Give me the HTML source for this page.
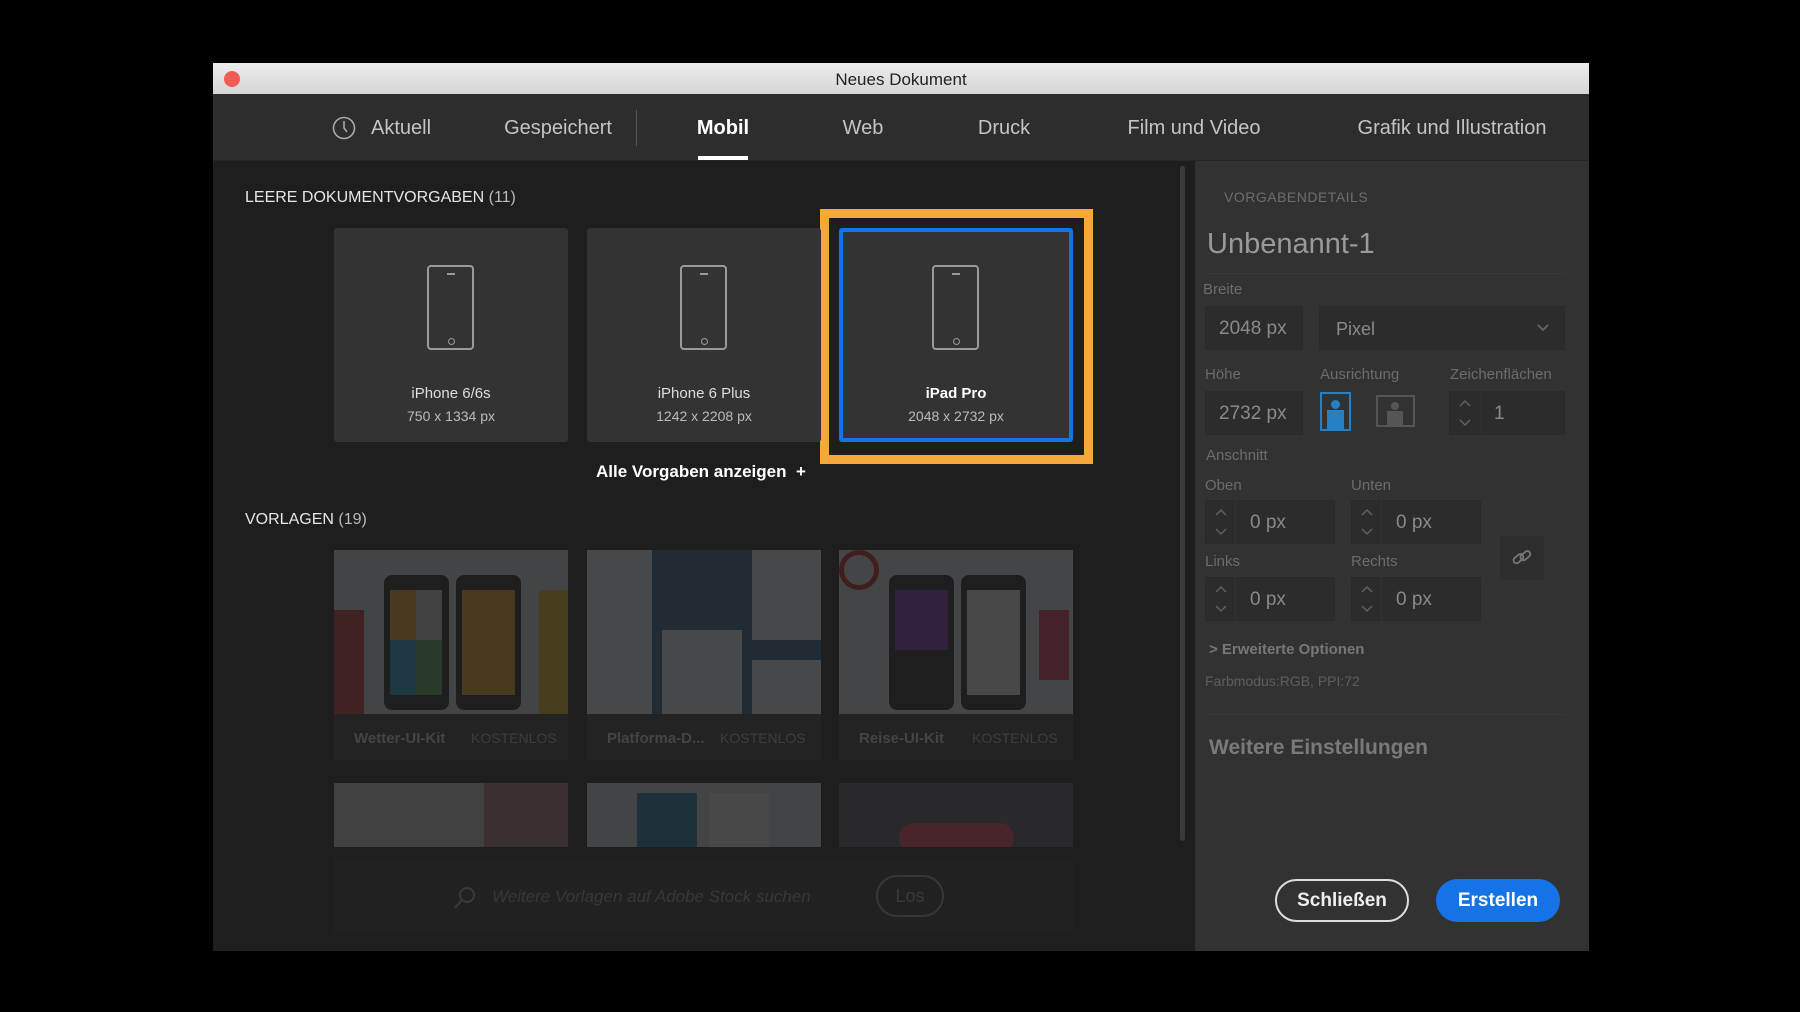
<!DOCTYPE html>
<html><head><meta charset="utf-8"><style>
*{margin:0;padding:0;box-sizing:border-box}
body{width:1800px;height:1012px;background:#000;font-family:"Liberation Sans",sans-serif;position:relative;overflow:hidden}
.a{position:absolute}
.win{left:213px;top:63px;width:1376px;height:888px;background:#1e1e1e}
.title{left:213px;top:63px;width:1376px;height:31px;background:linear-gradient(#ececec,#d6d6d6);color:#222;font-size:17px;text-align:center;line-height:33px}
.tabs{left:213px;top:94px;width:1376px;height:67px;background:#2d2d2d;border-bottom:1px solid #262626}
.tab{position:absolute;top:117px;color:#c4c4c4;font-size:20px;transform:translateX(-50%);white-space:nowrap}
.card{position:absolute;top:228px;width:234px;height:214px;background:#333;border-radius:3px}
.card .ph{position:absolute;left:93px;top:37px;width:47px;height:85px;border:2px solid #9a9a9a;border-radius:4px}
.card .ph:before{content:"";position:absolute;left:18px;top:6px;width:8px;height:2px;background:#9a9a9a}
.card .ph:after{content:"";position:absolute;left:19px;top:71px;width:5px;height:5px;border:1px solid #9a9a9a;border-radius:50%}
.card .n{position:absolute;top:157px;width:100%;text-align:center;color:#ddd;font-size:15px}
.card .s{position:absolute;top:180px;width:100%;text-align:center;color:#bbb;font-size:14px}
.right{left:1195px;top:161px;width:394px;height:790px;background:#323232}
.lbl{position:absolute;color:#6c6c6c;font-size:15px}
.fld{position:absolute;background:#2c2c2c;border:1px solid #2a2a2a;color:#8a8a8a;font-size:19px;line-height:44px}
.tpl{position:absolute;width:234px;opacity:.2;overflow:hidden}
.st{position:absolute}
</style></head><body>
<div class="a win"></div>
<div class="a title"><span class="a" style="left:11px;top:8px;width:16px;height:16px;border-radius:50%;background:#f45b55"></span>Neues Dokument</div>
<div class="a tabs"></div>
<svg class="a" style="left:332px;top:116px" width="24" height="24" viewBox="0 0 24 24"><circle cx="12" cy="12" r="10.5" fill="none" stroke="#aaa" stroke-width="1.6"/><path d="M12 5v7l3 4" fill="none" stroke="#aaa" stroke-width="1.6"/></svg>
<div class="tab" style="left:401px">Aktuell</div>
<div class="tab" style="left:558px">Gespeichert</div>
<div class="a" style="left:636px;top:110px;width:1px;height:36px;background:#555"></div>
<div class="tab" style="left:723px;color:#fff;font-weight:bold">Mobil</div>
<div class="a" style="left:698px;top:156px;width:50px;height:4px;background:#fff"></div>
<div class="tab" style="left:863px">Web</div>
<div class="tab" style="left:1004px">Druck</div>
<div class="tab" style="left:1194px">Film und Video</div>
<div class="tab" style="left:1452px">Grafik und Illustration</div>

<div class="a" style="left:245px;top:189px;color:#e6e6e6;font-size:16px">LEERE DOKUMENTVORGABEN <span style="color:#bbb">(11)</span></div>
<div class="a" style="left:820px;top:209px;width:273px;height:255px;border:9px solid #f5a93a"></div>
<div class="card" style="left:334px"><div class="ph"></div><div class="n">iPhone 6/6s</div><div class="s">750 x 1334 px</div></div>
<div class="card" style="left:587px"><div class="ph"></div><div class="n">iPhone 6 Plus</div><div class="s">1242 x 2208 px</div></div>
<div class="card" style="left:839px;border:4px solid #1473e6"><div class="ph" style="left:89px;top:33px"></div><div class="n" style="top:153px;color:#fff;font-weight:bold">iPad Pro</div><div class="s" style="top:176px">2048 x 2732 px</div></div>
<div class="a" style="left:596px;top:462px;color:#fff;font-size:17px;font-weight:bold">Alle Vorgaben anzeigen&nbsp; +</div>

<div class="a" style="left:245px;top:511px;color:#e6e6e6;font-size:16px">VORLAGEN <span style="color:#bbb">(19)</span></div>
<div class="tpl" style="left:334px;top:550px;height:164px;background:#d8dde0">
<div class="a" style="left:0;top:60px;width:30px;height:104px;background:#c33"></div>
<div class="a" style="left:50px;top:25px;width:65px;height:135px;background:#222;border-radius:8px"></div>
<div class="a" style="left:56px;top:40px;width:26px;height:50px;background:#f5a623"></div><div class="a" style="left:82px;top:40px;width:26px;height:50px;background:#ccc"></div>
<div class="a" style="left:56px;top:90px;width:26px;height:55px;background:#1aa0c8"></div><div class="a" style="left:82px;top:90px;width:26px;height:55px;background:#4caf50"></div>
<div class="a" style="left:122px;top:25px;width:65px;height:135px;background:#222;border-radius:8px"></div>
<div class="a" style="left:128px;top:40px;width:53px;height:105px;background:#f5a623"></div>
<div class="a" style="left:205px;top:40px;width:29px;height:124px;background:#e8c020"></div></div>
<div class="tpl" style="left:587px;top:550px;height:164px;background:#2a5f8a">
<div class="a" style="left:0;top:0;width:65px;height:164px;background:#e8eef3"></div><div class="a" style="left:75px;top:80px;width:80px;height:84px;background:#e8eef3"></div><div class="a" style="left:165px;top:0;width:69px;height:90px;background:#e8eef3"></div><div class="a" style="left:165px;top:110px;width:69px;height:54px;background:#e8eef3"></div></div>
<div class="tpl" style="left:839px;top:550px;height:164px;background:#dde2e6">
<div class="a" style="left:50px;top:25px;width:65px;height:135px;background:#222;border-radius:8px"></div><div class="a" style="left:56px;top:40px;width:53px;height:60px;background:#7b2fbf"></div>
<div class="a" style="left:122px;top:25px;width:65px;height:135px;background:#222;border-radius:8px"></div><div class="a" style="left:128px;top:40px;width:53px;height:105px;background:#f0f0f0"></div>
<div class="a" style="left:200px;top:60px;width:30px;height:70px;background:#e0335a"></div><div class="a" style="left:0;top:0;width:40px;height:40px;border:5px solid #c22;border-radius:50%"></div></div>
<div class="tpl" style="left:334px;top:714px;height:46px;background:#232323;opacity:1"><span class="a" style="left:20px;top:16px;color:#444;font-size:15px;font-weight:bold">Wetter-UI-Kit</span><span class="a" style="left:137px;top:16px;color:#3e3e3e;font-size:14px">KOSTENLOS</span></div>
<div class="tpl" style="left:587px;top:714px;height:46px;background:#232323;opacity:1"><span class="a" style="left:20px;top:16px;color:#444;font-size:15px;font-weight:bold">Platforma-D...</span><span class="a" style="left:133px;top:16px;color:#3e3e3e;font-size:14px">KOSTENLOS</span></div>
<div class="tpl" style="left:839px;top:714px;height:46px;background:#232323;opacity:1"><span class="a" style="left:20px;top:16px;color:#444;font-size:15px;font-weight:bold">Reise-UI-Kit</span><span class="a" style="left:133px;top:16px;color:#3e3e3e;font-size:14px">KOSTENLOS</span></div>
<div class="tpl" style="left:334px;top:783px;height:64px;background:#ccc"><div class="a" style="left:150px;top:0;width:84px;height:64px;background:#a77"></div></div>
<div class="tpl" style="left:587px;top:783px;height:64px;background:#d8dde0"><div class="a" style="left:50px;top:10px;width:60px;height:54px;background:#1a7fb0"></div><div class="a" style="left:122px;top:10px;width:60px;height:54px;background:#eee"></div></div>
<div class="tpl" style="left:839px;top:783px;height:64px;background:#556"><div class="a" style="left:60px;top:40px;width:115px;height:30px;background:#e8455a;border-radius:15px"></div></div>
<div class="a" style="left:334px;top:859px;width:739px;height:73px;background:#212121"></div>
<svg class="a" style="left:452px;top:885px" width="26" height="26" viewBox="0 0 26 26"><circle cx="15" cy="10" r="7" fill="none" stroke="#3a3a3a" stroke-width="2"/><path d="M10 15L3 23" stroke="#3a3a3a" stroke-width="2"/></svg>
<div class="a" style="left:492px;top:887px;color:#383838;font-size:17px;font-style:italic">Weitere Vorlagen auf Adobe Stock suchen</div>
<div class="a" style="left:876px;top:875px;width:68px;height:42px;border:2px solid #363636;border-radius:21px;color:#3a3a3a;font-size:18px;text-align:center;line-height:38px">Los</div>
<div class="a" style="left:1180px;top:166px;width:5px;height:675px;background:#3a3a3a;border-radius:3px"></div>

<div class="a right"></div>
<div class="lbl" style="left:1224px;top:189px;font-size:14px;color:#6e6e6e;letter-spacing:.5px">VORGABENDETAILS</div>
<div class="a" style="left:1207px;top:228px;color:#9a9a9a;font-size:29px">Unbenannt-1</div>
<div class="a" style="left:1205px;top:273px;width:360px;height:1px;background:#383838"></div>
<div class="lbl" style="left:1203px;top:281px">Breite</div>
<div class="fld" style="left:1205px;top:306px;width:98px;height:44px;padding-left:13px">2048 px</div>
<div class="fld" style="left:1319px;top:306px;width:246px;height:44px;padding-left:16px;font-size:18px">Pixel<svg class="a" style="right:14px;top:16px" width="14" height="10" viewBox="0 0 14 10"><path d="M2 2l5 5 5-5" fill="none" stroke="#666" stroke-width="1.8"/></svg></div>
<div class="lbl" style="left:1205px;top:366px">Höhe</div>
<div class="lbl" style="left:1320px;top:366px">Ausrichtung</div>
<div class="lbl" style="left:1450px;top:366px">Zeichenflächen</div>
<div class="fld" style="left:1205px;top:391px;width:98px;height:44px;padding-left:13px">2732 px</div>
<div class="a" style="left:1320px;top:392px;width:31px;height:39px;border:2px solid #2680c2"><div class="a" style="left:9px;top:6px;width:9px;height:9px;background:#2680c2;border-radius:50%"></div><div class="a" style="left:5px;top:16px;width:17px;height:19px;background:#2680c2"></div></div>
<div class="a" style="left:1376px;top:395px;width:39px;height:32px;border:2px solid #555"><div class="a" style="left:13px;top:5px;width:8px;height:8px;background:#555;border-radius:50%"></div><div class="a" style="left:9px;top:14px;width:16px;height:14px;background:#555"></div></div>
<div class="fld" style="left:1449px;top:391px;width:116px;height:44px;padding-left:44px">1</div>
<div class="a" style="left:1481px;top:391px;width:1px;height:44px;background:#333"></div>
<div class="lbl" style="left:1206px;top:447px">Anschnitt</div>
<div class="lbl" style="left:1205px;top:477px">Oben</div>
<div class="lbl" style="left:1351px;top:477px">Unten</div>
<div class="lbl" style="left:1205px;top:553px">Links</div>
<div class="lbl" style="left:1351px;top:553px">Rechts</div>
<div class="fld" style="left:1205px;top:500px;width:130px;height:44px;padding-left:44px">0 px</div>
<div class="fld" style="left:1351px;top:500px;width:130px;height:44px;padding-left:44px">0 px</div>
<div class="fld" style="left:1205px;top:577px;width:130px;height:44px;padding-left:44px">0 px</div>
<div class="fld" style="left:1351px;top:577px;width:130px;height:44px;padding-left:44px">0 px</div>
<div class="a" style="left:1235px;top:500px;width:1px;height:44px;background:#333"></div>
<div class="a" style="left:1381px;top:500px;width:1px;height:44px;background:#333"></div>
<div class="a" style="left:1235px;top:577px;width:1px;height:44px;background:#333"></div>
<div class="a" style="left:1381px;top:577px;width:1px;height:44px;background:#333"></div>
<svg class="st" style="left:1213px;top:506px" width="16" height="32" viewBox="0 0 16 32"><path d="M3 9l5-5 5 5M3 23l5 5 5-5" fill="none" stroke="#606060" stroke-width="1.5"/></svg>
<svg class="st" style="left:1359px;top:506px" width="16" height="32" viewBox="0 0 16 32"><path d="M3 9l5-5 5 5M3 23l5 5 5-5" fill="none" stroke="#606060" stroke-width="1.5"/></svg>
<svg class="st" style="left:1213px;top:583px" width="16" height="32" viewBox="0 0 16 32"><path d="M3 9l5-5 5 5M3 23l5 5 5-5" fill="none" stroke="#606060" stroke-width="1.5"/></svg>
<svg class="st" style="left:1359px;top:583px" width="16" height="32" viewBox="0 0 16 32"><path d="M3 9l5-5 5 5M3 23l5 5 5-5" fill="none" stroke="#606060" stroke-width="1.5"/></svg>
<svg class="st" style="left:1457px;top:397px" width="16" height="32" viewBox="0 0 16 32"><path d="M3 9l5-5 5 5M3 23l5 5 5-5" fill="none" stroke="#606060" stroke-width="1.5"/></svg>
<div class="a" style="left:1500px;top:536px;width:44px;height:44px;background:#2d2d2d;border-radius:3px"></div>
<svg class="a" style="left:1511px;top:547px" width="22" height="22" viewBox="0 0 22 22"><g fill="none" stroke="#777" stroke-width="1.8"><rect x="2" y="9" width="11" height="6" rx="3" transform="rotate(-40 7 12)"/><rect x="9" y="6" width="11" height="6" rx="3" transform="rotate(-40 14 9)"/></g></svg>
<div class="lbl" style="left:1209px;top:641px;color:#777;font-weight:bold">&gt; Erweiterte Optionen</div>
<div class="lbl" style="left:1205px;top:673px;color:#5e5e5e;font-size:14px">Farbmodus:RGB, PPI:72</div>
<div class="a" style="left:1205px;top:714px;width:360px;height:1px;background:#3a3a3a"></div>
<div class="a" style="left:1209px;top:736px;color:#7a7a7a;font-size:21px;font-weight:bold">Weitere Einstellungen</div>
<div class="a" style="left:1275px;top:879px;width:134px;height:43px;border:2px solid #ddd;border-radius:22px;color:#eee;font-size:19px;font-weight:bold;text-align:center;line-height:40px">Schließen</div>
<div class="a" style="left:1436px;top:879px;width:124px;height:43px;background:#1473e6;border-radius:22px;color:#fff;font-size:19px;font-weight:bold;text-align:center;line-height:44px">Erstellen</div>
</body></html>
